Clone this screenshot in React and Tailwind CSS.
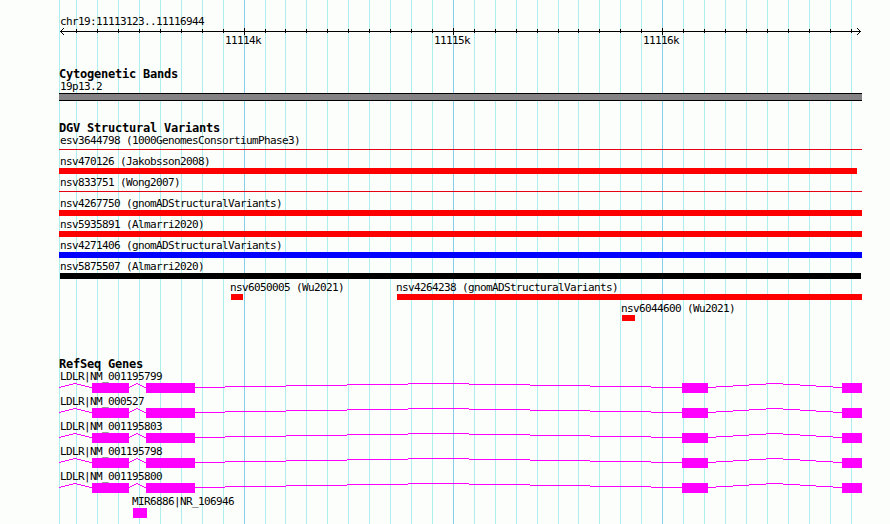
import React from 'react';

// x positions of the ruler lines, major ones fall on whole kilobases
const minorLines = [
  76, 97, 118, 139, 160, 181, 202, 223, 265, 285, 306, 327, 348, 369, 390, 411, 432,
  474, 495, 516, 537, 558, 578, 599, 620, 641, 683, 704, 725, 746, 767, 788, 809, 830, 851,
];
const majorLines = [244, 453, 662];

const variants = [
  { name: 'esv3644798 (1000GenomesConsortiumPhase3)', thin: true, start: 59, end: 862, color: 'bg-[#e60012]' },
  { name: 'nsv470126 (Jakobsson2008)', start: 59, end: 857, color: 'bg-[#ff0000]' },
  { name: 'nsv833751 (Wong2007)', thin: true, start: 59, end: 862, color: 'bg-[#e60012]' },
  { name: 'nsv4267750 (gnomADStructuralVariants)', start: 59, end: 862, color: 'bg-[#ff0000]' },
  { name: 'nsv5935891 (Almarri2020)', start: 59, end: 862, color: 'bg-[#ff0000]' },
  { name: 'nsv4271406 (gnomADStructuralVariants)', start: 59, end: 862, color: 'bg-[#0000ff]' },
  { name: 'nsv5875507 (Almarri2020)', start: 60, end: 861, color: 'bg-black' },
];

const genes = ['NM_001195799', 'NM_000527', 'NM_001195803', 'NM_001195798', 'NM_001195800'];

const exons = [[92, 37], [146, 49], [682, 26], [842, 20]];

// intron hats as [x, y, width] steps, y is relative to the top of the row
const introns = [
  [59, 4, 2], [61, 3, 4], [65, 2, 4], [69, 1, 4], [73, 0, 4], [77, 1, 4], [81, 2, 4], [85, 3, 4], [89, 4, 3],
  [129, 4, 1], [130, 3, 2], [132, 2, 2], [134, 1, 2], [136, 0, 2], [138, 1, 2], [140, 2, 2], [142, 3, 2], [144, 4, 2],
  [195, 4, 30], [225, 3, 61], [286, 2, 61], [347, 1, 61], [408, 0, 61], [469, 1, 61], [530, 2, 60], [590, 3, 61], [651, 4, 31],
  [708, 4, 8], [716, 3, 17], [733, 2, 16], [749, 1, 17], [766, 0, 17], [783, 1, 17], [800, 2, 16], [816, 3, 17], [833, 4, 9],
];

const Label = ({ children, className = '' }) => (
  <p className={`h-[13px] whitespace-pre text-[11px] leading-[13px] tracking-[-0.622px] ${className}`}>{children}</p>
);

const Heading = ({ children }) => (
  <h2 className="h-[12px] whitespace-pre pl-[59px] text-[12px] leading-[13px] font-bold tracking-[-0.224px]">{children}</h2>
);

const GridLines = () => (
  <svg className="absolute inset-0" width="890" height="524" shapeRendering="crispEdges">
    {[59, ...minorLines].map(x => <rect key={x} x={x} y="0" width="1" height="524" fill="#afeeee" />)}
    {majorLines.map(x => <rect key={x} x={x} y="0" width="1" height="524" fill="#87ceeb" />)}
  </svg>
);

const Ruler = () => (
  <svg className="block" width="890" height="7" shapeRendering="crispEdges">
    <rect x="60" y="3" width="801" height="1" />
    {minorLines.map(x => <rect key={x} x={x} y="1" width="1" height="4" />)}
    {majorLines.map(x => <rect key={x} x={x} y="0" width="1" height="7" />)}
    {[1, 2, 3].map(d => (
      <g key={d}>
        <rect x={60 + d} y={3 - d} width="1" height="1" />
        <rect x={60 + d} y={3 + d} width="1" height="1" />
        <rect x={860 - d} y={3 - d} width="1" height="1" />
        <rect x={860 - d} y={3 + d} width="1" height="1" />
      </g>
    ))}
  </svg>
);

const Variant = ({ name, start, end, color, thin }) => (
  <div className="h-[21px]">
    <Label className="pl-[60px]">{name}</Label>
    <div className={thin ? 'pt-[2px]' : ''}>
      <div className={`${color} ${thin ? 'h-px' : 'h-[6px]'}`} style={{ marginLeft: start, width: end - start }} />
    </div>
  </div>
);

const Gene = ({ name }) => (
  <div className="h-[25px]">
    <Label className="pl-[60px]">{name}</Label>
    <svg className="block" width="890" height="12" fill="#ff00ff" shapeRendering="crispEdges">
      {introns.map(([x, y, w]) => <rect key={x} x={x} y={y} width={w} height="1" />)}
      {exons.map(([x, w]) => <rect key={x} x={x} y="0" width={w} height="10" />)}
    </svg>
  </div>
);

export default function App() {
  return (
    <div className="relative h-[524px] w-[890px] overflow-hidden bg-[#fcfefc] font-['DejaVu_Sans_Mono',monospace] text-black">
      <GridLines />
      <main className="relative pt-[15px]">
        <Label className="pl-[60px]">chr19:11113123..11116944</Label>
        <Ruler />
        <div className="-mt-px flex pl-[225px]">
          <Label className="w-[209px]">11114k</Label>
          <Label className="w-[209px]">11115k</Label>
          <Label>11116k</Label>
        </div>

        <section className="pt-[21px]">
          <Heading>Cytogenetic Bands</Heading>
          <Label className="pl-[60px]">19p13.2</Label>
          <div className="ml-[59px] h-[8px] w-[803px] border-y border-black bg-[#848284]" />
        </section>

        <section className="pt-[21px]">
          <Heading>DGV Structural Variants</Heading>
          {variants.map(v => <Variant key={v.name} {...v} />)}
          <div className="flex h-[21px] pl-[231px]">
            <div className="w-[166px]">
              <Label className="-ml-px">nsv6050005 (Wu2021)</Label>
              <div className="h-[6px] w-[12px] bg-[#ff0000]" />
            </div>
            <div className="w-[465px]">
              <Label className="-ml-px">nsv4264238 (gnomADStructuralVariants)</Label>
              <div className="h-[6px] bg-[#ff0000]" />
            </div>
          </div>
          <div className="h-[21px] pl-[622px]">
            <Label className="-ml-px">nsv6044600 (Wu2021)</Label>
            <div className="h-[6px] w-[13px] bg-[#ff0000]" />
          </div>
        </section>

        <section className="pt-[35px]">
          <Heading>RefSeq Genes</Heading>
          {genes.map(g => <Gene key={g} name={`LDLR|${g}`} />)}
          <div className="pl-[133px]">
            <Label className="-ml-px">MIR6886|NR_106946</Label>
            <div className="h-[10px] w-[14px] bg-[#ff00ff]" />
          </div>
        </section>
      </main>
    </div>
  );
}
